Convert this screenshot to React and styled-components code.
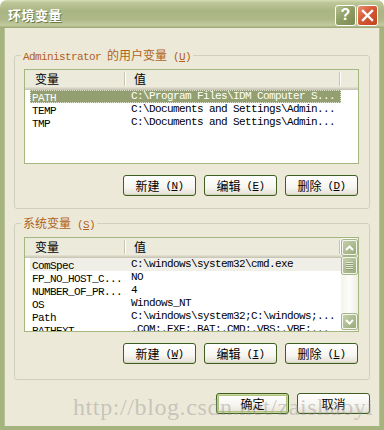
import React from "react";
import styled, { createGlobalStyle } from "styled-components";

const GlobalStyle = createGlobalStyle`
  html, body {
    margin: 0;
    padding: 0;
    background: #ffffff;
  }
  body {
    font-family: "Noto Sans CJK SC", sans-serif;
  }
`;

const userVars = [
	{ name: "PATH", value: "C:\\Program Files\\IDM Computer S...", selected: true },
	{ name: "TEMP", value: "C:\\Documents and Settings\\Admin..." },
	{ name: "TMP", value: "C:\\Documents and Settings\\Admin..." },
];

const systemVars = [
	{ name: "ComSpec", value: "C:\\windows\\system32\\cmd.exe", inactive: true },
	{ name: "FP_NO_HOST_C...", value: "NO" },
	{ name: "NUMBER_OF_PR...", value: "4" },
	{ name: "OS", value: "Windows_NT" },
	{ name: "Path", value: "C:\\windows\\system32;C:\\windows;..." },
	{ name: "PATHEXT", value: ".COM;.EXE;.BAT;.CMD;.VBS;.VBE;..." },
];

export default function App() {
	return (
		<>
			<GlobalStyle />
			<Window>
				<TitleBar>
					<Title>环境变量</Title>
					<Caps>
						<CapButton kind='help'>?</CapButton>
						<CapButton kind='close'>
							<svg width='13' height='13' viewBox='0 0 13 13'>
								<path
									d='M2 2 L11 11 M11 2 L2 11'
									stroke='#fff'
									strokeWidth='2.4'
									strokeLinecap='square'
								/>
							</svg>
						</CapButton>
					</Caps>
				</TitleBar>
				<Body>
					<Group bottom={12}>
						<Legend>
							<Lat>Administrator </Lat>
							<Cn>的用户变量</Cn>
							<Lat>
								{" "}(<u>U</u>)
							</Lat>
						</Legend>
						<VarList rows={userVars} />
						<ButtonRow>
							<Button>
								<Cn>新建</Cn>
								<Lat>
									{" "}(<u>N</u>)
								</Lat>
							</Button>
							<Button>
								<Cn>编辑</Cn>
								<Lat>
									{" "}(<u>E</u>)
								</Lat>
							</Button>
							<Button>
								<Cn>删除</Cn>
								<Lat>
									{" "}(<u>D</u>)
								</Lat>
							</Button>
						</ButtonRow>
					</Group>
					<Group bottom={15} spaced>
						<Legend>
							<Cn>系统变量</Cn>
							<Lat>
								{" "}(<u>S</u>)
							</Lat>
						</Legend>
						<VarList rows={systemVars} scroll />
						<ButtonRow>
							<Button>
								<Cn>新建</Cn>
								<Lat>
									{" "}(<u>W</u>)
								</Lat>
							</Button>
							<Button>
								<Cn>编辑</Cn>
								<Lat>
									{" "}(<u>I</u>)
								</Lat>
							</Button>
							<Button>
								<Cn>删除</Cn>
								<Lat>
									{" "}(<u>L</u>)
								</Lat>
							</Button>
						</ButtonRow>
					</Group>
					<DialogButtons>
						<Button isDefault>
							<Cn>确定</Cn>
						</Button>
						<Button>
							<Cn>取消</Cn>
						</Button>
					</DialogButtons>
				</Body>
				<Watermark>http://blog.csdn.net/zaishaoyi</Watermark>
			</Window>
		</>
	);
}

function VarList({ rows, scroll }) {
	return (
		<List>
			<ListMain>
				<Header>
					<HeadCell width={99} pad={10}>
						<Cn>变量</Cn>
					</HeadCell>
					<HeadDivider />
					<HeadCell width={213} pad={8}>
						<Cn>值</Cn>
					</HeadCell>
					<HeadDivider />
				</Header>
				<Rows>
					{rows.map((row) => (
						<Row
							key={row.name}
							selected={row.selected}
							inactive={row.inactive}>
							<NameCell>
								<Lat>{row.name}</Lat>
							</NameCell>
							<Lat>{row.value}</Lat>
						</Row>
					))}
				</Rows>
			</ListMain>
			{scroll && (
				<ScrollBar>
					<ScrollButton>
						<svg width='9' height='6' viewBox='0 0 9 6'>
							<path d='M1 5 L4.5 1.5 L8 5' stroke='#fff' strokeWidth='2' fill='none' />
						</svg>
					</ScrollButton>
					<Thumb>
						<Grip />
						<Grip />
						<Grip />
						<Grip />
					</Thumb>
					<Track />
					<ScrollButton>
						<svg width='9' height='6' viewBox='0 0 9 6'>
							<path d='M1 1 L4.5 4.5 L8 1' stroke='#fff' strokeWidth='2' fill='none' />
						</svg>
					</ScrollButton>
				</ScrollBar>
			)}
		</List>
	);
}

const Window = styled.div`
	position: relative;
	width: 384px;
	height: 430px;
	display: flex;
	flex-direction: column;
	overflow: hidden;
	border-radius: 7px 7px 0 0;
	background: #ece9d8;
	font-size: 12px;
	color: #000;
`;

const TitleBar = styled.div`
	height: 28px;
	flex-shrink: 0;
	display: flex;
	align-items: center;
	justify-content: space-between;
	padding: 0 6px 0 8px;
	box-sizing: border-box;
	background: linear-gradient(
		180deg,
		#d6dcb6 0%,
		#bcc596 10%,
		#aab583 40%,
		#aeb888 70%,
		#c3cb9f 90%,
		#98a571 100%
	);
`;

const Title = styled.div`
	font-family: "Noto Sans CJK SC", sans-serif;
	font-weight: 700;
	font-size: 13px;
	color: #ffffff;
	text-shadow: 1px 1px 0 #6f7c4a;
	letter-spacing: 0.5px;
	margin-top: 1px;
`;

const Caps = styled.div`
	display: flex;
	gap: 1px;
	margin-top: 2px;
`;

const CapButton = styled.div`
	width: 21px;
	height: 21px;
	box-sizing: border-box;
	border: 1px solid #ffffff;
	border-radius: 3px;
	display: flex;
	align-items: center;
	justify-content: center;
	color: #fff;
	font-family: "Liberation Sans", sans-serif;
	font-weight: 700;
	font-size: 16px;
	background: ${(p) =>
		p.kind === "close"
			? "linear-gradient(135deg, #e98e6e 0%, #d55a35 45%, #c1401f 100%)"
			: "linear-gradient(135deg, #b5c18f 0%, #8d9b64 50%, #7b8a53 100%)"};
`;

const Body = styled.div`
	flex: 1;
	display: flex;
	flex-direction: column;
	padding: 20px 10px 0 10px;
	border-left: 4px solid #a5b37e;
	border-right: 4px solid #a5b37e;
	border-bottom: 4px solid #a5b37e;
	box-shadow: inset 1px 0 0 #b7c393, inset -1px 0 0 #b7c393;
`;

const Group = styled.fieldset`
	margin: ${(p) => (p.spaced ? "7px" : "0")} 0 0 0;
	padding: 7px 10px ${(p) => p.bottom}px 9px;
	border: 1px solid #d0d0bf;
	border-radius: 3px;
	min-width: 0;
	display: flex;
	flex-direction: column;
`;

const Legend = styled.legend`
	padding: 0 2px;
	margin-left: -3px;
	line-height: 14px;
	height: 14px;
	color: #b0621b;
	white-space: nowrap;
`;

const Lat = styled.span`
	font-family: "Liberation Mono", monospace;
	font-size: 11px;
	letter-spacing: -0.6px;
	white-space: pre;
`;

const Cn = styled.span`
	font-family: "Noto Sans CJK SC", sans-serif;
	font-size: 12px;
	letter-spacing: 0;
`;

const List = styled.div`
	height: 95px;
	box-sizing: border-box;
	border: 1px solid #a5b780;
	background: #ffffff;
	display: flex;
	overflow: hidden;
`;

const ListMain = styled.div`
	flex: 1;
	display: flex;
	flex-direction: column;
	min-width: 0;
`;

const Header = styled.div`
	height: 20px;
	flex-shrink: 0;
	display: flex;
	align-items: center;
	background: #ebeadb;
	box-shadow: inset 0 -1px 0 #cbc7b8, inset 0 -2px 0 #d6d2c2,
		inset 0 -3px 0 #e2decd;
	padding-bottom: 2px;
	box-sizing: border-box;
`;

const HeadCell = styled.div`
	width: ${(p) => p.width}px;
	padding-left: ${(p) => p.pad}px;
	box-sizing: border-box;
	line-height: 14px;
`;

const HeadDivider = styled.div`
	width: 1px;
	height: 14px;
	background: #c7c5b2;
	box-shadow: 1px 0 0 #ffffff;
	margin-right: 1px;
`;

const Rows = styled.div`
	display: flex;
	flex-direction: column;
`;

const Row = styled.div`
	height: 13px;
	width: 311px;
	margin-left: 5px;
	display: flex;
	align-items: center;
	box-sizing: border-box;
	line-height: 13px;
	color: ${(p) => (p.selected ? "#ffffff" : "#000000")};
	background: ${(p) =>
		p.selected ? "#939f70" : p.inactive ? "#efeee7" : "transparent"};
	outline: ${(p) => (p.selected ? "1px dotted #dfe3cc" : "none")};
	outline-offset: -1px;
	white-space: nowrap;
	overflow: hidden;
`;

const NameCell = styled.div`
	width: 101px;
	padding-left: 2px;
	box-sizing: border-box;
	flex-shrink: 0;
	overflow: hidden;
`;

const ScrollBar = styled.div`
	width: 17px;
	flex-shrink: 0;
	display: flex;
	flex-direction: column;
	gap: 2px;
	padding: 2px 0 2px 1px;
	box-sizing: border-box;
	background: linear-gradient(90deg, #f4f3ec 0%, #fcfcf9 50%, #efeee5 100%);
`;

const ScrollButton = styled.div`
	height: 15px;
	width: 15px;
	box-sizing: border-box;
	border: 1px solid #f5f7ef;
	border-radius: 2px;
	box-shadow: 0 0 0 1px #a6b489;
	display: flex;
	align-items: center;
	justify-content: center;
	background: linear-gradient(135deg, #c4d0ac 0%, #a9b88d 60%, #9aaa7e 100%);
`;

const Thumb = styled(ScrollButton)`
	height: 17px;
	flex-direction: column;
	gap: 1px;
`;

const Grip = styled.div`
	width: 7px;
	height: 1px;
	background: #e4ead7;
	box-shadow: 0 1px 0 #8e9e72;
`;

const Track = styled.div`
	flex: 1;
`;

const ButtonRow = styled.div`
	display: flex;
	justify-content: flex-end;
	gap: 8px;
	margin-top: 11px;
	margin-right: 1px;
`;

const DialogButtons = styled.div`
	display: flex;
	justify-content: flex-end;
	gap: 8px;
	margin-top: 13px;
`;

const Button = styled.div`
	width: 73px;
	height: 21px;
	box-sizing: border-box;
	border: 1px solid #3f5e22;
	border-radius: 3px;
	display: flex;
	align-items: center;
	justify-content: center;
	background: linear-gradient(180deg, #ffffff 0%, #f6f5f0 60%, #e3e0d2 100%);
	box-shadow: ${(p) =>
		p.isDefault
			? "inset 0 0 0 1px #c9d79e, inset 0 0 0 2px #b2c47e"
			: "inset 0 -1px 0 #d6d2c0"};
	line-height: 14px;
`;

const Watermark = styled.div`
	position: absolute;
	left: 73px;
	top: 394px;
	font-family: "Liberation Serif", serif;
	font-size: 24px;
	letter-spacing: 0.6px;
	color: rgba(150, 150, 150, 0.45);
	white-space: nowrap;
	pointer-events: none;
`;
